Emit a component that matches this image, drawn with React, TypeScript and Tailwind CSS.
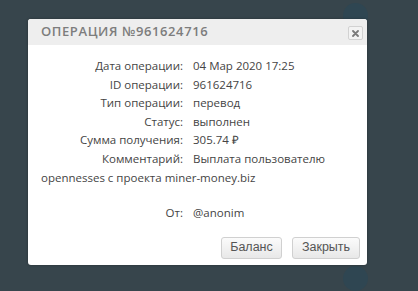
import React from "react";

const rows: [string, string][] = [
  ["Дата операции:", "04 Мар 2020 17:25"],
  ["ID операции:", "961624716"],
  ["Тип операции:", "перевод"],
  ["Статус:", "выполнен"],
  ["Сумма получения:", "305.74 ₽"],
  ["Комментарий:", "Выплата пользователю"],
];

function Row({ label, value }: { label: string; value: string }) {
  return (
    <div className="flex gap-[10px] leading-[18.6px]">
      <span className="w-[142px] text-right">{label}</span>
      <span>{value}</span>
    </div>
  );
}

export default function App() {
  return (
    <div className="relative w-[418px] h-[291px] overflow-hidden bg-[#37454c] pt-[19px] pl-[28px]">
      {/* page behind the overlay */}
      <div className="absolute left-[343px] top-[3px] w-[25px] h-[25px] rounded-full bg-[#2f4652]" />
      <div className="absolute left-[343px] top-[266px] w-[25px] h-[25px] rounded-full bg-[#2f4652]" />

      <div className="relative w-[339px] h-[246px] bg-white rounded-[3px] shadow-[0_0_3px_rgba(0,0,0,0.3)] overflow-hidden">
        <div className="flex items-center justify-between h-[26px] bg-[#eeeeee] pl-[13px] pr-[4px]">
          <span className="text-[13px] font-semibold tracking-[0.6px] text-[#7d7d7d] font-['Open_Sans',sans-serif]">
            ОПЕРАЦИЯ №961624716
          </span>
          <button className="flex items-center justify-center w-[15px] h-[14px] mt-[2px] border border-[#d2d2d2] rounded-[2px] bg-[#f3f3f3]">
            <svg width="7" height="7" viewBox="0 0 7 7">
              <path d="M1 1L6 6M6 1L1 6" stroke="#7a7a7a" strokeWidth="1.8" strokeLinecap="round" />
            </svg>
          </button>
        </div>

        <div className="pl-[13px] pr-[10px] pt-[12px] text-[11.5px] text-[#444] font-['Open_Sans',sans-serif]">
          {rows.map(([l, v]) => (
            <Row key={l} label={l} value={v} />
          ))}
          <div className="leading-[18.6px]">opennesses с проекта miner-money.biz</div>
          <div className="mt-[17px]">
            <Row label="От:" value="@anonim" />
          </div>
        </div>

        <div className="flex justify-end gap-[10px] pr-[7px] mt-[14px] font-['Liberation_Sans',Arial,sans-serif]">
          <button className="w-[61px] h-[22px] rounded-[3px] border border-[#d0d0d0] bg-gradient-to-b from-[#fbfbfb] to-[#e8e8e8] text-[12.5px] text-[#555]">
            Баланс
          </button>
          <button className="w-[68px] h-[22px] rounded-[3px] border border-[#d0d0d0] bg-gradient-to-b from-[#fbfbfb] to-[#e8e8e8] text-[12.5px] text-[#555]">
            Закрыть
          </button>
        </div>
      </div>
    </div>
  );
}
